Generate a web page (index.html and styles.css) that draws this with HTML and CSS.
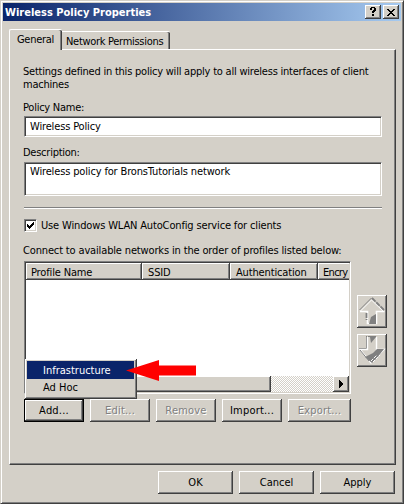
FILE: index.html
```html
<!DOCTYPE html>
<html lang="en">
<head>
<meta charset="utf-8">
<title>Wireless Policy Properties</title>
<link rel="stylesheet" href="styles.css">
</head>
<body>
<div class="window">
  <header class="titlebar">
    <span class="title">Wireless Policy Properties</span>
    <button class="caption" aria-label="Help"><svg width="10" height="10" shape-rendering="crispEdges"><path d="M2 0h5v1h1v3h-1v1h-1v1h-2v-2h1v-1h1v-2h-2v2h-2v-2h1zM4 7h2v2h-2z"/></svg></button>
    <button class="caption close" aria-label="Close"><svg width="10" height="9" shape-rendering="crispEdges"><path d="M1 1h2v1h1v1h2v-1h1v-1h2v1h-1v1h-1v1h-1v1h1v1h1v1h1v1h-2v-1h-1v-1h-2v1h-1v1h-2v-1h1v-1h1v-1h1v-1h-1v-1h-1v-1h-1z"/></svg></button>
  </header>
  <nav class="tabs">
    <div class="tab active">General</div>
    <div class="tab">Network Permissions</div>
  </nav>
  <main class="panel">
    <p class="intro">Settings defined in this policy will apply to all wireless interfaces of client<br>machines</p>
    <div class="label name-label">Policy Name:</div>
    <div class="field">Wireless Policy</div>
    <div class="label desc-label">Description:</div>
    <div class="field area">Wireless policy for BronsTutorials network</div>
    <div class="rule"></div>
    <div class="check-row">
      <span class="checkbox"><svg width="9" height="9" shape-rendering="crispEdges"><path d="M1 3h1v1h1v1h1v-1h1v-1h1v-1h1v-1h1v3h-1v1h-1v1h-1v1h-1v1h-1v-1h-1v-1h-1z"/></svg></span>
      <span>Use Windows WLAN AutoConfig service for clients</span>
    </div>
    <div class="label list-label">Connect to available networks in the order of profiles listed below:</div>
    <div class="list-row">
      <div class="list">
        <div class="columns">
          <span class="col profile">Profile Name</span><span class="col ssid">SSID</span><span class="col auth">Authentication</span><span class="col encry">Encry</span>
        </div>
        <div class="list-space"></div>
        <div class="scrollbar">
          <div class="thumb"></div><div class="track"></div>
          <div class="scroll-btn"><svg width="5" height="8" shape-rendering="crispEdges"><path d="M0 0h1v1h1v1h1v1h1v2h-1v1h-1v1h-1v1h-1z"/></svg></div>
        </div>
      </div>
      <div class="movers">
        <div class="mover"><svg width="28" height="31"><path d="M2 15.5H9.5V27.5H18.5V15.5H26.5" fill="none" stroke="#fff" stroke-width="1.6"/><path d="M1.5 14L13.5 2" fill="none" stroke="#808080"/><path d="M2.5 15L13.5 4L25 15" fill="none" stroke="#fff"/><path d="M14 2L26 14M8.5 17V24" fill="none" stroke="#808080" stroke-width="1.8" stroke-dasharray="5 1"/><path d="M11 28L13 21L18 18V28Z" fill="#808080"/></svg></div>
        <div class="mover"><svg width="28" height="31"><path d="M1 13.5H8.5V1M10 1.5H18" fill="none" stroke="#808080"/><path d="M9.5 2V14.5H2L13 28L26 14.5H18.5V2" fill="none" stroke="#fff" stroke-width="1.4"/><path d="M19 14H26L19 23L14 28L7 22L15 18ZM12 2H18L13 8Z" fill="#808080"/><path d="M2 15L11 26" stroke="#808080"/><path d="M13 26L19 20M15 27L22 20" stroke="#fff" stroke-dasharray="3 1"/></svg></div>
      </div>
    </div>
    <div class="actions">
      <button class="btn default">Add...</button>
      <button class="btn" disabled>Edit...</button>
      <button class="btn" disabled>Remove</button>
      <button class="btn">Import...</button>
      <button class="btn wide" disabled>Export...</button>
    </div>
    <div class="menu">
      <div class="item selected">Infrastructure</div>
      <div class="item">Ad Hoc</div>
    </div>
    <svg class="pointer" width="70" height="21"><path d="M0 10.5L33 0V5.5H70V15.5H33V21Z" fill="#f00"/></svg>
  </main>
  <footer class="footer">
    <button class="btn">OK</button><button class="btn">Cancel</button><button class="btn">Apply</button>
  </footer>
</div>
</body>
</html>
```
FILE: styles.css
```css
* { box-sizing: border-box; }
body {
  margin: 0;
  background: #d4d0c8;
  font: 11px/14px "DejaVu Sans Condensed", "DejaVu Sans", sans-serif;
  font-stretch: condensed;
  letter-spacing: -0.15px;
  color: #000;
}
.window {
  width: 404px;
  height: 504px;
  padding: 1px;
  border: 1px solid;
  border-color: #d4d0c8 #404040 #404040 #d4d0c8;
  box-shadow: inset 1px 1px #fff, inset -1px -1px #808080;
  white-space: nowrap;
}
.titlebar {
  display: flex;
  align-items: center;
  height: 18px;
  margin: 1px 1px 0;
  padding: 0 2px;
  background: linear-gradient(90deg, #0a246a, #a6caf0);
  color: #fff;
}
.title { flex: 1; padding-top: 1px; font-weight: bold; letter-spacing: 0; }
button {
  font: inherit;
  letter-spacing: 0;
  color: inherit;
  padding: 0;
  border: 0;
}
.btn, .caption, .scroll-btn, .thumb, .mover {
  display: flex;
  align-items: center;
  justify-content: center;
  background: #d4d0c8;
  box-shadow: inset -1px -1px #404040, inset 1px 1px #fff, inset -2px -2px #808080;
}
.caption { width: 16px; height: 14px; }
.close { margin-left: 2px; }
.tabs { display: flex; align-items: flex-end; height: 28px; padding-left: 7px; letter-spacing: -0.3px; }
.tab {
  position: relative;
  width: 108px;
  height: 18px;
  padding: 3px 0 0 4px;
  border: solid #fff;
  border-width: 1px 0 0;
  border-radius: 0 2px 0 0;
  box-shadow: inset -1px 0 #404040, inset -2px 0 #808080;
}
.tab.active {
  z-index: 1;
  width: 53px;
  height: 21px;
  margin-bottom: -1px;
  padding: 3px 0 0 7px;
  border-left-width: 1px;
  border-radius: 2px 2px 0 0;
  background: #d4d0c8;
}
.panel {
  position: relative;
  width: 387px;
  height: 416px;
  margin-left: 7px;
  padding: 15px 13px 0 14px;
  border: solid;
  border-width: 1px;
  border-color: #fff #404040 #404040 #fff;
  box-shadow: inset -1px -1px #808080;
}
.intro { height: 28px; margin: 0 0 0 -1px; line-height: 13px; letter-spacing: -0.22px; }
.label { height: 14px; margin-left: -1px; }
.name-label { margin-top: 7px; padding-top: 1px; letter-spacing: -0.25px; }
.field {
  width: 358px;
  height: 21px;
  margin-top: 2px;
  padding: 3px 5px;
  border: 1px solid;
  border-color: #808080 #fff #fff #808080;
  background: #fff;
  box-shadow: inset 1px 1px #404040, inset -1px -1px #d4d0c8;
}
.desc-label { margin-top: 8px; padding-top: 1px; letter-spacing: -0.25px; }
.area { height: 34px; margin-top: 3px; padding-top: 2px; }
.rule { width: 358px; height: 2px; margin-top: 11px; border-top: 1px solid #808080; background: #fff; }
.check-row { display: flex; align-items: center; gap: 4px; height: 13px; margin-top: 10px; }
.checkbox {
  flex: none;
  width: 13px;
  height: 13px;
  padding: 1px;
  line-height: 0;
  background: #fff;
  border: 1px solid;
  border-color: #808080 #fff #fff #808080;
  box-shadow: inset 1px 1px #404040, inset -1px -1px #d4d0c8;
}
.list-label { margin-top: 11px; padding-top: 1px; }
.list-row { display: flex; gap: 6px; margin-top: 4px; }
.list {
  width: 327px;
  height: 133px;
  padding: 1px;
  border: 1px solid;
  border-color: #808080 #fff #fff #808080;
  background: #fff;
  box-shadow: inset 1px 1px #404040, inset -1px -1px #d4d0c8;
}
.columns { display: flex; height: 17px; overflow: hidden; }
.col {
  flex: none;
  padding: 3px 0 0 5px;
  background: #d4d0c8;
  box-shadow: inset -1px -1px #404040, inset 1px 1px #fff, inset -2px -2px #808080;
}
.profile { width: 116px; }
.ssid { width: 88px; padding-left: 6px; }
.auth { width: 88px; padding-left: 6px; }
.encry { width: 31px; padding-left: 5px; letter-spacing: -0.7px; box-shadow: inset 0 -1px #404040, inset 1px 1px #fff, inset 0 -2px #808080; }
.list-space { height: 96px; }
.scrollbar { display: flex; height: 16px; }
.thumb { width: 245px; }
.track { flex: 1; background: repeating-conic-gradient(#fff 0 25%, #d4d0c8 0 50%) 0 0 / 2px 2px; }
.scroll-btn { width: 16px; }
.movers { display: flex; flex-direction: column; gap: 6px; padding-top: 34px; }
.mover { width: 30px; height: 33px; }
.actions { display: flex; gap: 6px; margin-top: 5px; }
.btn { width: 60px; height: 23px; }
.btn.wide { width: 63px; }
.actions .btn { letter-spacing: 0.2px; }
.btn:disabled { color: #808080; text-shadow: 1px 1px #fff; }
.btn.default { border: 1px solid #000; }
.menu {
  position: absolute;
  left: 15px;
  top: 309px;
  width: 112px;
  height: 40px;
  padding: 2px;
  background: #d4d0c8;
  letter-spacing: 0;
  box-shadow: inset -1px -1px #404040, inset 1px 1px #fff, inset -2px -2px #808080;
}
.item { width: 107px; height: 18px; padding: 3px 0 0 16px; }
.item + .item { padding-top: 2px; }
.selected { background: #0a246a; color: #fff; }
.pointer { position: absolute; left: 116px; top: 310px; }
.footer { display: flex; gap: 6px; margin: 6px 0 0 156px; }
.footer .btn { width: 75px; }
```
